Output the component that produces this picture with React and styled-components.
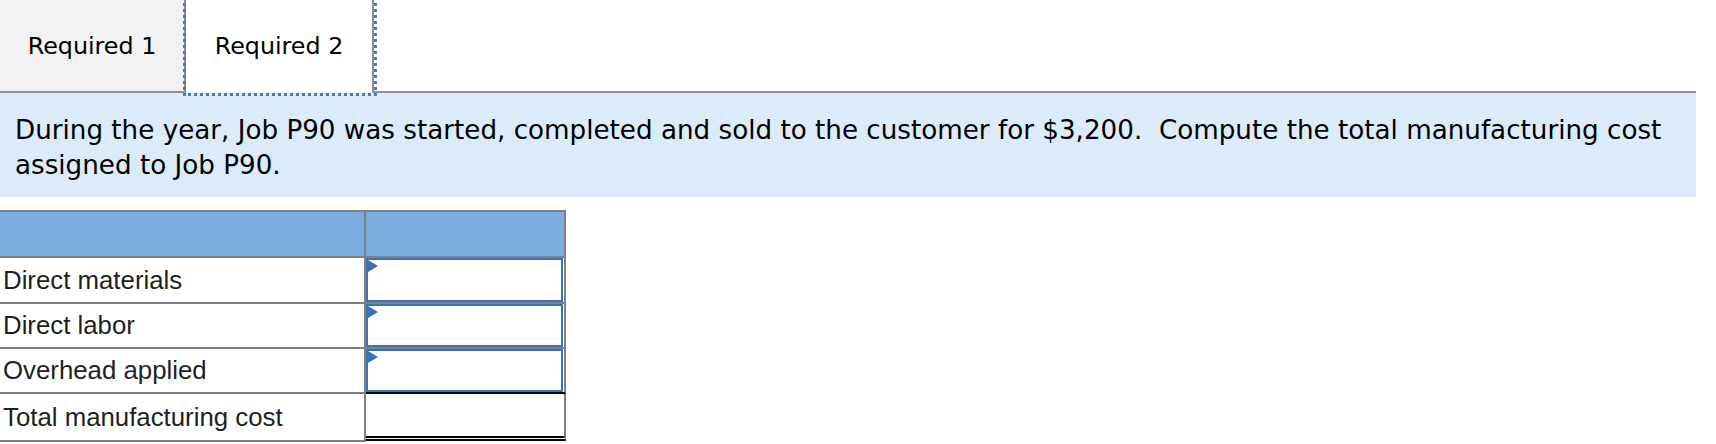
import React from "react";
import styled, { createGlobalStyle } from "styled-components";

const Global = createGlobalStyle`
  html, body { margin: 0; padding: 0; background: #ffffff; }
  body { font-family: "DejaVu Sans", Verdana, sans-serif; color: #000; }
`;

const Page = styled.div`
  width: 1716px;
  padding-right: 20px;
  box-sizing: border-box;
`;

const TabBar = styled.div`
  display: flex;
  height: 93px;
  box-sizing: border-box;
  border-bottom: 2px solid #8f8f8f;
`;

const Tab = styled.div`
  display: flex;
  align-items: center;
  justify-content: center;
  box-sizing: border-box;
  width: ${(p) => p.$width}px;
  height: ${(p) => (p.$active ? 93 : 91)}px;
  padding-bottom: ${(p) => (p.$active ? 2 : 0)}px;
  background: ${(p) => (p.$active ? "#ffffff" : "#f2f2f2")};
  border-right: 2px solid #8f8f8f;
  font-size: 23.8px;
  color: #000;
  position: relative;
  z-index: ${(p) => (p.$active ? 1 : 0)};
  outline: ${(p) => (p.$active ? "3px dotted #3f7cc6" : "none")};
`;

const Prompt = styled.div`
  background: #dcebf9;
  padding: 20px 15px 14px;
  font-size: 26.2px;
  line-height: 35px;
  color: #000;
`;

const Table = styled.div`
  margin-top: 13px;
  width: 566px;
  border-top: 2px solid #808080;
  font-family: "Liberation Sans", Arial, sans-serif;
`;

const Row = styled.div`
  display: grid;
  grid-template-columns: 366px 200px;
`;

const LabelCell = styled.div`
  box-sizing: border-box;
  height: ${(p) => p.$h}px;
  display: flex;
  align-items: center;
  padding-left: 3px;
  border-right: 2px solid #808080;
  border-bottom: 2px solid #808080;
  background: ${(p) => (p.$header ? "#7badE1" : "#ffffff")};
  font-size: 25.8px;
  color: #1f1f1f;
`;

const ValueCell = styled.div`
  box-sizing: border-box;
  height: ${(p) => p.$h}px;
  border-right: 2px solid #808080;
  border-bottom: ${(p) =>
    p.$total ? "5px double #000" : `2px solid ${p.$beforeTotal ? "#000" : "#808080"}`};
  background: ${(p) => (p.$header ? "#7badE1" : "#ffffff")};
`;

const InputBox = styled.div`
  position: relative;
  box-sizing: border-box;
  height: 100%;
  margin-right: 1px;
  border: 2px solid #3b72b6;
  background: #fff;
`;

const Marker = styled.span`
  position: absolute;
  left: 0;
  top: 0;
  width: 0;
  height: 0;
  border-top: 6.5px solid transparent;
  border-bottom: 6.5px solid transparent;
  border-left: 10px solid #3b72b6;
`;

const rows = [
  { label: "Direct materials", input: true, h: 46 },
  { label: "Direct labor", input: true, h: 45 },
  { label: "Overhead applied", input: true, beforeTotal: true, h: 45 },
  { label: "Total manufacturing cost", total: true, h: 48, vh: 47 },
];

export default function App() {
  return (
    <Page>
      <Global />
      <TabBar>
        <Tab $width={186}>Required 1</Tab>
        <Tab $width={188} $active>
          Required 2
        </Tab>
      </TabBar>
      <Prompt>
        During the year, Job P90 was started, completed and sold to the customer for $3,200.&nbsp; Compute the total
        manufacturing cost assigned to Job P90.
      </Prompt>
      <Table>
        <Row>
          <LabelCell $header $h={46} />
          <ValueCell $header $h={46} />
        </Row>
        {rows.map((r) => (
          <Row key={r.label}>
            <LabelCell $h={r.h}>{r.label}</LabelCell>
            <ValueCell $h={r.vh || r.h} $total={r.total} $beforeTotal={r.beforeTotal}>
              {r.input && (
                <InputBox>
                  <Marker />
                </InputBox>
              )}
            </ValueCell>
          </Row>
        ))}
      </Table>
    </Page>
  );
}
